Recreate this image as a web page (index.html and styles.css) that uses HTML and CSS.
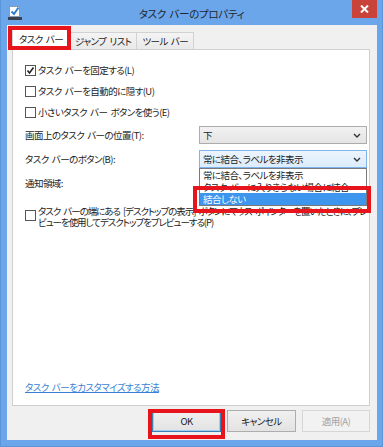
FILE: index.html
```html
<!DOCTYPE html>
<html lang="ja">
<head>
    <meta charset="UTF-8">
    <meta name="viewport" content="width=device-width, initial-scale=1.0">
    <title>タスク バーのプロパティ</title>
    <link rel="stylesheet" href="styles.css">
</head>
<body>
    <div class="window">
        <div class="titlebar">
            <svg class="app-icon" width="14" height="16" viewBox="0 0 14 16">
                <rect x="1.5" y="1.5" width="10" height="10" fill="#fff" stroke="#8a9bb0"/>
                <polyline points="3.5,6.5 6,9 10.5,2.5" fill="none" stroke="#2d7fd3" stroke-width="2"/>
                <rect x="0" y="12" width="14" height="3" fill="#3a4150"/>
            </svg>
            <div class="title">タスク バーのプロパティ</div>
            <div class="close">
                <svg width="9" height="8" viewBox="0 0 9 8">
                    <path d="M1 0.5 L8 7.5 M8 0.5 L1 7.5" stroke="#fff" stroke-width="2"/>
                </svg>
            </div>
        </div>

        <div class="client">
            <div class="tabs">
                <div class="tab active">タスク バー</div>
                <div class="tab">ジャンプ リスト</div>
                <div class="tab">ツール バー</div>
            </div>

            <div class="panel">
                <div class="check first">
                    <span class="box checked">
                        <svg width="9" height="9" viewBox="0 0 9 9"><polyline points="1.5,4.5 3.5,7 7.5,1.5" fill="none" stroke="#222" stroke-width="1.6"/></svg>
                    </span>
                    タスク バーを固定する(L)
                </div>
                <div class="check">
                    <span class="box"></span>
                    タスク バーを自動的に隠す(U)
                </div>
                <div class="check">
                    <span class="box"></span>
                    小さいタスク バー ボタンを使う(E)
                </div>

                <div class="field pos">
                    <span>画面上のタスク バーの位置(T):</span>
                    <div class="select">
                        下
                        <svg class="chev" width="8" height="5" viewBox="0 0 8 5"><polyline points="1,1 4,4 7,1" fill="none" stroke="#333" stroke-width="1.4"/></svg>
                    </div>
                </div>
                <div class="field btns">
                    <span>タスク バーのボタン(B):</span>
                    <div class="select focus">
                        常に結合、ラベルを非表示
                        <svg class="chev" width="8" height="5" viewBox="0 0 8 5"><polyline points="1,1 4,4 7,1" fill="none" stroke="#333" stroke-width="1.4"/></svg>
                        <ul class="dropdown">
                            <li>常に結合、ラベルを非表示</li>
                            <li>タスク バーに入りきらない場合に結合</li>
                            <li class="selected">結合しない</li>
                        </ul>
                    </div>
                </div>
                <div class="field notify">通知領域:</div>

                <div class="check multi">
                    <span class="box"></span>
                    <span class="long">タスク バーの端にある [デスクトップの表示] ボタンにマウス ポインターを置いたときに、プレ<br>ビューを使用してデスクトップをプレビューする(P)</span>
                </div>

                <a href="#" class="link">タスク バーをカスタマイズする方法</a>
            </div>

            <div class="buttons">
                <div class="button default">OK</div>
                <div class="button">キャンセル</div>
                <div class="button disabled">適用(A)</div>
            </div>
        </div>

        <!-- 赤枠の注釈 -->
        <div class="mark mark-tab"></div>
        <div class="mark mark-list"></div>
        <div class="mark mark-ok"></div>
    </div>
</body>
</html>
```

FILE: styles.css
```css
body {
    margin: 0;
    font-family: "Noto Sans CJK JP", "Noto Sans", sans-serif;
    font-size: 9.5px;
    letter-spacing: -0.55px;
    word-spacing: 1.5px;
    font-feature-settings: "palt";
    color: #1b1b1b;
}
.window {
    position: relative;
    width: 383px;
    height: 447px;
    overflow: hidden;
    background-color: #6ca6ea;
    display: flex;
    flex-direction: column;
    box-sizing: border-box;
    border-left: 1px solid #5a95da;
    border-right: 1px solid #5a95da;
    border-bottom: 1px solid #5a95da;
}
.titlebar {
    height: 25px;
    display: flex;
    align-items: center;
    position: relative;
}
.app-icon {
    margin-left: 7px;
    margin-top: 1px;
}
.title {
    position: absolute;
    left: 0;
    right: 0;
    top: 6px;
    text-align: center;
    font-size: 10.5px;
    letter-spacing: -0.3px;
    color: #1e2630;
    line-height: 16px;
}
.close {
    position: absolute;
    right: 5px;
    top: 0;
    width: 25px;
    height: 18px;
    background-color: #c9433b;
    display: flex;
    align-items: center;
    justify-content: center;
}
.client {
    flex: 1;
    margin: 0 5px 6px 6px;
    background-color: #f0f0f0;
    padding: 5px 7px 0 5px;
    display: flex;
    flex-direction: column;
}
.tabs {
    display: flex;
    align-items: flex-end;
    height: 19px;
    position: relative;
    z-index: 1;
}
.tab {
    height: 16px;
    line-height: 16px;
    padding: 0 5px;
    background: linear-gradient(#f4f4f4, #e9e9e9);
    border: 1px solid #d2d2d2;
    border-bottom: none;
    margin-left: -1px;
    white-space: nowrap;
}
.tab.active {
    height: 20px;
    line-height: 18px;
    margin-left: 0;
    margin-bottom: -1px;
    padding: 0 6px;
    background: #fff;
}
.panel {
    height: 357px;
    box-sizing: border-box;
    background-color: #fff;
    border: 1px solid #cfcfcf;
    padding: 10px 2px 12px 12px;
    display: flex;
    flex-direction: column;
}
.check {
    display: flex;
    align-items: center;
    height: 20px;
    gap: 2px;
    white-space: nowrap;
}
.check + .check {
    margin-top: 1px;
}
.box {
    width: 11px;
    height: 11px;
    box-sizing: border-box;
    border: 1px solid #555;
    background: #fff;
    display: flex;
    align-items: center;
    justify-content: center;
    flex-shrink: 0;
}
.field {
    display: flex;
    justify-content: space-between;
    align-items: center;
}
.field.pos {
    margin-top: 4px;
}
.field.btns {
    margin-top: 6px;
}
.field.notify {
    margin-top: 7px;
    height: 16px;
}
.select {
    position: relative;
    width: 168px;
    height: 18px;
    box-sizing: border-box;
    border: 1px solid #acacac;
    background: linear-gradient(#f2f2f2, #e4e4e4);
    padding-left: 3px;
    line-height: 16px;
    display: flex;
    align-items: center;
}
.select.focus {
    border-color: #7eb4ea;
    background: linear-gradient(#ecf4fc, #dcecfc);
}
.chev {
    position: absolute;
    right: 5px;
    top: 6px;
}
.dropdown {
    position: absolute;
    left: -1px;
    right: -1px;
    top: 17px;
    margin: 0;
    padding: 0;
    list-style: none;
    background: #fff;
    border: 1px solid #7a7a7a;
    z-index: 2;
}
.dropdown li {
    height: 12px;
    line-height: 12px;
    padding-left: 3px;
    white-space: nowrap;
    overflow: hidden;
}
.dropdown li.selected {
    background-color: #3d95ee;
    color: #fff;
}
.check.multi {
    margin-top: 15px;
    height: auto;
    align-items: flex-start;
    line-height: 11px;
}
.check.multi .box {
    margin-top: 4px;
}
.long {
    letter-spacing: -1.05px;
    word-spacing: 2px;
}
.link {
    margin-top: auto;
    align-self: flex-start;
    color: #3a7fd5;
    text-decoration: underline;
    line-height: 12px;
}
.buttons {
    display: flex;
    justify-content: flex-end;
    gap: 6px;
    margin-top: 4px;
}
.button {
    width: 69px;
    height: 22px;
    box-sizing: border-box;
    border: 1px solid #adadad;
    background: linear-gradient(#f0f0f0, #e3e3e3);
    text-align: center;
    line-height: 20px;
}
.button.default {
    border-color: #3c7fb1;
    box-shadow: inset 0 0 0 1px #9fcdf4;
}
.button.disabled {
    width: 68px;
    border-color: #d6d6d6;
    background: #f2f2f2;
    color: #a3a3a3;
}
.mark {
    position: absolute;
    border: 4px solid #e8141b;
    box-sizing: border-box;
    z-index: 5;
}
.mark-tab {
    left: 7px;
    top: 26px;
    width: 63px;
    height: 24px;
}
.mark-list {
    left: 192px;
    top: 186px;
    width: 178px;
    height: 27px;
}
.mark-ok {
    left: 147px;
    top: 409px;
    width: 77px;
    height: 30px;
}
```
